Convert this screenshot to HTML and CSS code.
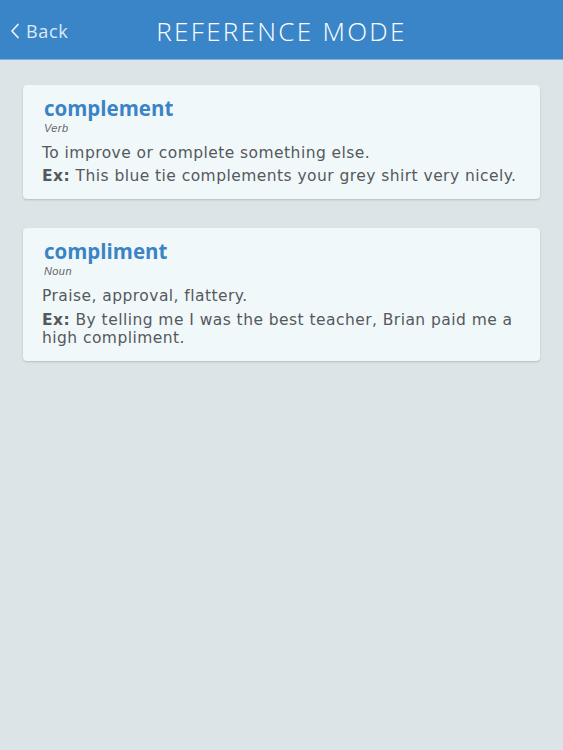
FILE: index.html
```html
<!DOCTYPE html>
<html>
<head>
<meta charset="utf-8">
<link rel="stylesheet" href="styles.css">
</head>
<body>
<header class="topbar">
  <a class="back">
    <svg class="chev" width="10" height="16" viewBox="0 0 10 16"><path d="M8 1.5 L2 8 L8 14.5" fill="none" stroke="#e6f0fa" stroke-width="1.8" stroke-linecap="round" stroke-linejoin="round"/></svg>
    <span>Back</span>
  </a>
  <h1 class="title">REFERENCE MODE</h1>
</header>
<main class="list">
  <section class="card">
    <h2 class="word">complement</h2>
    <div class="pos">Verb</div>
    <p class="def">To improve or complete something else.</p>
    <p class="ex"><b>Ex:</b> <span>This blue tie complements your grey shirt very nicely.</span></p>
  </section>
  <section class="card">
    <h2 class="word">compliment</h2>
    <div class="pos">Noun</div>
    <p class="def">Praise, approval, flattery.</p>
    <p class="ex"><b>Ex:</b> <span>By telling me I was the best teacher, Brian paid me a</span><br><span>high compliment.</span></p>
  </section>
</main>
</body>
</html>
```
FILE: styles.css
```css
html, body {
  margin: 0;
  padding: 0;
}
body {
  width: 563px;
  height: 750px;
  background: #dde4e7;
  font-family: "Open Sans", "Liberation Sans", sans-serif;
  color: #55595d;
}
.topbar {
  height: 59px;
  background: #3985c8;
  border-bottom: 1px solid #7fb0df;
  display: flex;
  align-items: center;
  position: relative;
  color: #fff;
}
.back {
  display: flex;
  align-items: center;
  gap: 6px;
  padding-left: 10px;
  font-size: 18px;
  font-weight: 400;
  letter-spacing: 0.7px;
  color: #dce9f6;
  position: absolute;
  left: 0;
  top: 19px;
}
.chev { display: block; }
.title {
  margin: 0 auto;
  font-size: 26px;
  font-weight: 300;
  letter-spacing: 2.3px;
  color: #fff;
  padding-top: 2px;
}
.list {
  padding: 25px 23px 0 23px;
  display: flex;
  flex-direction: column;
  gap: 29px;
}
.card {
  background: #f1f8fa;
  border-radius: 4px;
  box-shadow: 0 1px 2px rgba(0,0,0,0.18);
  padding: 12px 20px 14px 19px;
}
.word {
  margin: 0 0 0 2px;
  font-size: 20.5px;
  font-weight: 700;
  color: #3a84c5;
  line-height: 22px;
}
.pos {
  margin: 3px 0 10px 2px;
  font-family: "Liberation Sans", "Open Sans", sans-serif;
  font-size: 11px;
  font-style: italic;
  letter-spacing: 0.4px;
  color: #666;
  line-height: 12px;
}
.def, .ex {
  margin: 0;
  font-family: "DejaVu Sans", "Open Sans", sans-serif;
  font-size: 15.5px;
  line-height: 18.2px;
  letter-spacing: 0.45px;
}
.def { margin-bottom: 5px; }
.ex b { font-weight: 600; }
```
